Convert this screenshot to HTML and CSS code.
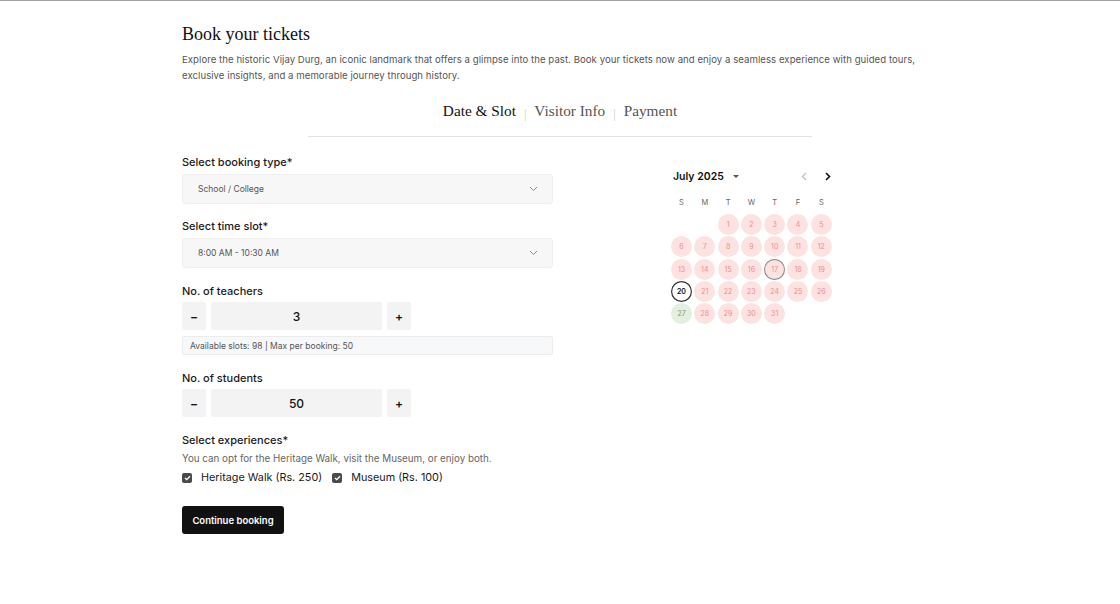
FILE: index.html
```html
<!DOCTYPE html>
<html lang="en">
<head>
<meta charset="utf-8">
<title>Book your tickets</title>
<link rel="stylesheet" href="styles.css">
</head>
<body>
<div class="topbar"></div>
<main class="page">
  <h1 class="title">Book your tickets</h1>
  <p class="desc">Explore the historic Vijay Durg, an iconic landmark that offers a glimpse into the past. Book your tickets now and enjoy a seamless experience with guided tours, exclusive insights, and a memorable journey through history.</p>

  <nav class="tabs">
    <span class="tab active">Date &amp; Slot</span>
    <span class="sep">|</span>
    <span class="tab">Visitor Info</span>
    <span class="sep">|</span>
    <span class="tab">Payment</span>
  </nav>

  <div class="layout">
    <form class="form">
      <div class="field first">
        <label class="label">Select booking type*</label>
        <div class="select">
          <span>School / College</span>
          <svg class="chev" width="9" height="6" viewBox="0 0 9 6"><polyline points="1,1 4.5,4.5 8,1" fill="none" stroke="#888" stroke-width="1"/></svg>
        </div>
      </div>

      <div class="field">
        <label class="label">Select time slot*</label>
        <div class="select">
          <span>8:00 AM - 10:30 AM</span>
          <svg class="chev" width="9" height="6" viewBox="0 0 9 6"><polyline points="1,1 4.5,4.5 8,1" fill="none" stroke="#888" stroke-width="1"/></svg>
        </div>
      </div>

      <div class="field">
        <label class="label tight">No. of teachers</label>
        <div class="stepper">
          <span class="step-btn">&minus;</span>
          <span class="step-val">3</span>
          <span class="step-btn">+</span>
        </div>
        <div class="info">Available slots: 98 | Max per booking: 50</div>
      </div>

      <div class="field">
        <label class="label tight">No. of students</label>
        <div class="stepper">
          <span class="step-btn">&minus;</span>
          <span class="step-val">50</span>
          <span class="step-btn">+</span>
        </div>
      </div>

      <div class="field">
        <label class="label">Select experiences*</label>
        <p class="hint">You can opt for the Heritage Walk, visit the Museum, or enjoy both.</p>
        <div class="checks">
          <span class="check">
            <span class="box"><svg width="7" height="6" viewBox="0 0 7 6"><polyline points="1,3 2.8,4.6 6,1.2" fill="none" stroke="#fff" stroke-width="1.3"/></svg></span>
            Heritage Walk (Rs. 250)
          </span>
          <span class="check">
            <span class="box"><svg width="7" height="6" viewBox="0 0 7 6"><polyline points="1,3 2.8,4.6 6,1.2" fill="none" stroke="#fff" stroke-width="1.3"/></svg></span>
            Museum (Rs. 100)
          </span>
        </div>
      </div>

      <button type="button" class="cta">Continue booking</button>
    </form>

    <aside class="cal-col">
      <div class="calendar">
        <div class="cal-head">
          <span class="month">July 2025 <span class="caret"></span></span>
          <span class="navs">
            <svg width="6" height="9" viewBox="0 0 6 9"><polyline points="5,1 1.5,4.5 5,8" fill="none" stroke="#bbb" stroke-width="1.2"/></svg>
            <svg width="6" height="9" viewBox="0 0 6 9"><polyline points="1,1 4.5,4.5 1,8" fill="none" stroke="#111" stroke-width="1.6"/></svg>
          </span>
        </div>
        <div class="grid wk">
          <span>S</span><span>M</span><span>T</span><span>W</span><span>T</span><span>F</span><span>S</span>
        </div>
        <div class="grid days">
          <span></span><span></span>
          <span class="d">1</span><span class="d">2</span><span class="d">3</span><span class="d">4</span><span class="d">5</span>
          <span class="d">6</span><span class="d">7</span><span class="d">8</span><span class="d">9</span><span class="d">10</span><span class="d">11</span><span class="d">12</span>
          <span class="d">13</span><span class="d">14</span><span class="d">15</span><span class="d">16</span><span class="d ring">17</span><span class="d">18</span><span class="d">19</span>
          <span class="d sel">20</span><span class="d">21</span><span class="d">22</span><span class="d">23</span><span class="d">24</span><span class="d">25</span><span class="d">26</span>
          <span class="d ok">27</span><span class="d">28</span><span class="d">29</span><span class="d">30</span><span class="d">31</span>
        </div>
      </div>
    </aside>
  </div>
</main>
</body>
</html>
```

FILE: styles.css
```css
* { box-sizing: border-box; }

body {
  margin: 0;
  background: #fff;
  font-family: Inter, "Open Sans", Arial, sans-serif;
  color: #1a1a1a;
}

.topbar {
  height: 1px;
  background: #a3a3a3;
}

.page {
  width: 756px;
  margin: 0 auto;
  padding-top: 21px;
}

.title {
  margin: 0;
  font-family: "Liberation Serif", "DejaVu Serif", serif;
  font-weight: 400;
  font-size: 18px;
  line-height: 24px;
  color: #111;
}

.desc {
  margin: 6px 0 0;
  font-size: 9.6px;
  line-height: 16px;
  color: #555;
  letter-spacing: 0.05px;
}

.tabs {
  width: 504px;
  margin: 17px auto 0;
  padding-bottom: 14px;
  border-bottom: 1px solid #e2e2e2;
  display: flex;
  justify-content: center;
  align-items: baseline;
  gap: 8px;
  font-family: "Liberation Serif", "DejaVu Serif", serif;
  font-size: 15.3px;
  line-height: 20px;
}

.tab { color: #555; }
.tab.active { color: #111; }
.sep { color: #ccc; font-size: 12px; position: relative; top: 2px; }

.layout {
  display: grid;
  grid-template-columns: 371px 371px;
  column-gap: 14px;
  margin-top: 17px;
}

.form {
  display: flex;
  flex-direction: column;
  gap: 15px;
}

.field { display: flex; flex-direction: column; }
.field.first { margin-bottom: -1px; }

.label {
  font-size: 11px;
  font-weight: 500;
  line-height: 16px;
  color: #1a1a1a;
  margin-bottom: 4px;
}
.label.tight { margin-bottom: 3px; }

.select {
  height: 30px;
  background: #f7f7f7;
  border: 1px solid #efefef;
  border-radius: 3px;
  display: flex;
  align-items: center;
  justify-content: space-between;
  padding: 0 14px 0 15px;
  font-size: 8.5px;
  color: #555;
}

.stepper {
  display: flex;
  gap: 5px;
  height: 28px;
}

.step-btn {
  width: 24px;
  background: #f3f3f3;
  border-radius: 2px;
  display: flex;
  align-items: center;
  justify-content: center;
  font-size: 12px;
  font-weight: 600;
  color: #111;
}

.step-val {
  width: 171px;
  background: #f3f3f3;
  border-radius: 2px;
  display: flex;
  align-items: center;
  justify-content: center;
  font-size: 12px;
  font-weight: 500;
  color: #111;
}

.info {
  margin-top: 6px;
  height: 19px;
  background: #f7f8f9;
  border: 1px solid #ececec;
  border-radius: 2px;
  padding: 0 7px;
  display: flex;
  align-items: center;
  font-size: 8.5px;
  color: #555;
}

.hint {
  margin: 0;
  font-size: 9.8px;
  line-height: 14px;
  color: #666;
}

.checks {
  margin-top: 4px;
  display: flex;
  gap: 10px;
  line-height: 16px;
  font-size: 10.8px;
  color: #1a1a1a;
}

.check {
  display: flex;
  align-items: center;
  gap: 9px;
}

.box {
  width: 10px;
  height: 10px;
  background: #4a4a4a;
  border-radius: 2px;
  display: flex;
  align-items: center;
  justify-content: center;
}

.cta {
  margin-top: 5px;
  align-self: flex-start;
  width: 102px;
  height: 28px;
  border: 0;
  border-radius: 3px;
  background: #111;
  color: #fff;
  font-family: Inter, "Open Sans", Arial, sans-serif;
  font-size: 9.5px;
  font-weight: 600;
  padding: 0;
}

.cal-col {
  display: flex;
  justify-content: center;
}

.calendar {
  width: 163px;
  margin-top: 12px;
}

.cal-head {
  height: 20px;
  display: flex;
  align-items: center;
  justify-content: space-between;
  padding-left: 2px;
}

.month {
  font-size: 10.5px;
  font-weight: 600;
  color: #111;
  display: flex;
  align-items: center;
  gap: 9px;
}

.caret {
  width: 0;
  height: 0;
  border-left: 3px solid transparent;
  border-right: 3px solid transparent;
  border-top: 3px solid #555;
}

.navs {
  display: flex;
  gap: 18px;
  padding-right: 3px;
}

.grid {
  display: grid;
  grid-template-columns: repeat(7, 21px);
  column-gap: 2.3px;
}

.wk {
  margin-top: 10px;
  line-height: 14px;
  font-size: 7.5px;
  color: #666;
  text-align: center;
}

.days {
  margin-top: 4px;
  row-gap: 1.3px;
  grid-auto-rows: 21px;
}

.d {
  width: 21px;
  height: 21px;
  border-radius: 50%;
  background: #fde2e2;
  color: #ef8d8d;
  font-size: 7px;
  display: flex;
  align-items: center;
  justify-content: center;
}

.d.ring { box-shadow: inset 0 0 0 1px #888; }
.d.sel {
  background: #fff;
  box-shadow: inset 0 0 0 1.2px #333;
  color: #111;
  font-weight: 600;
}
.d.ok { background: #e4efe2; color: #7a9a7a; }
```
